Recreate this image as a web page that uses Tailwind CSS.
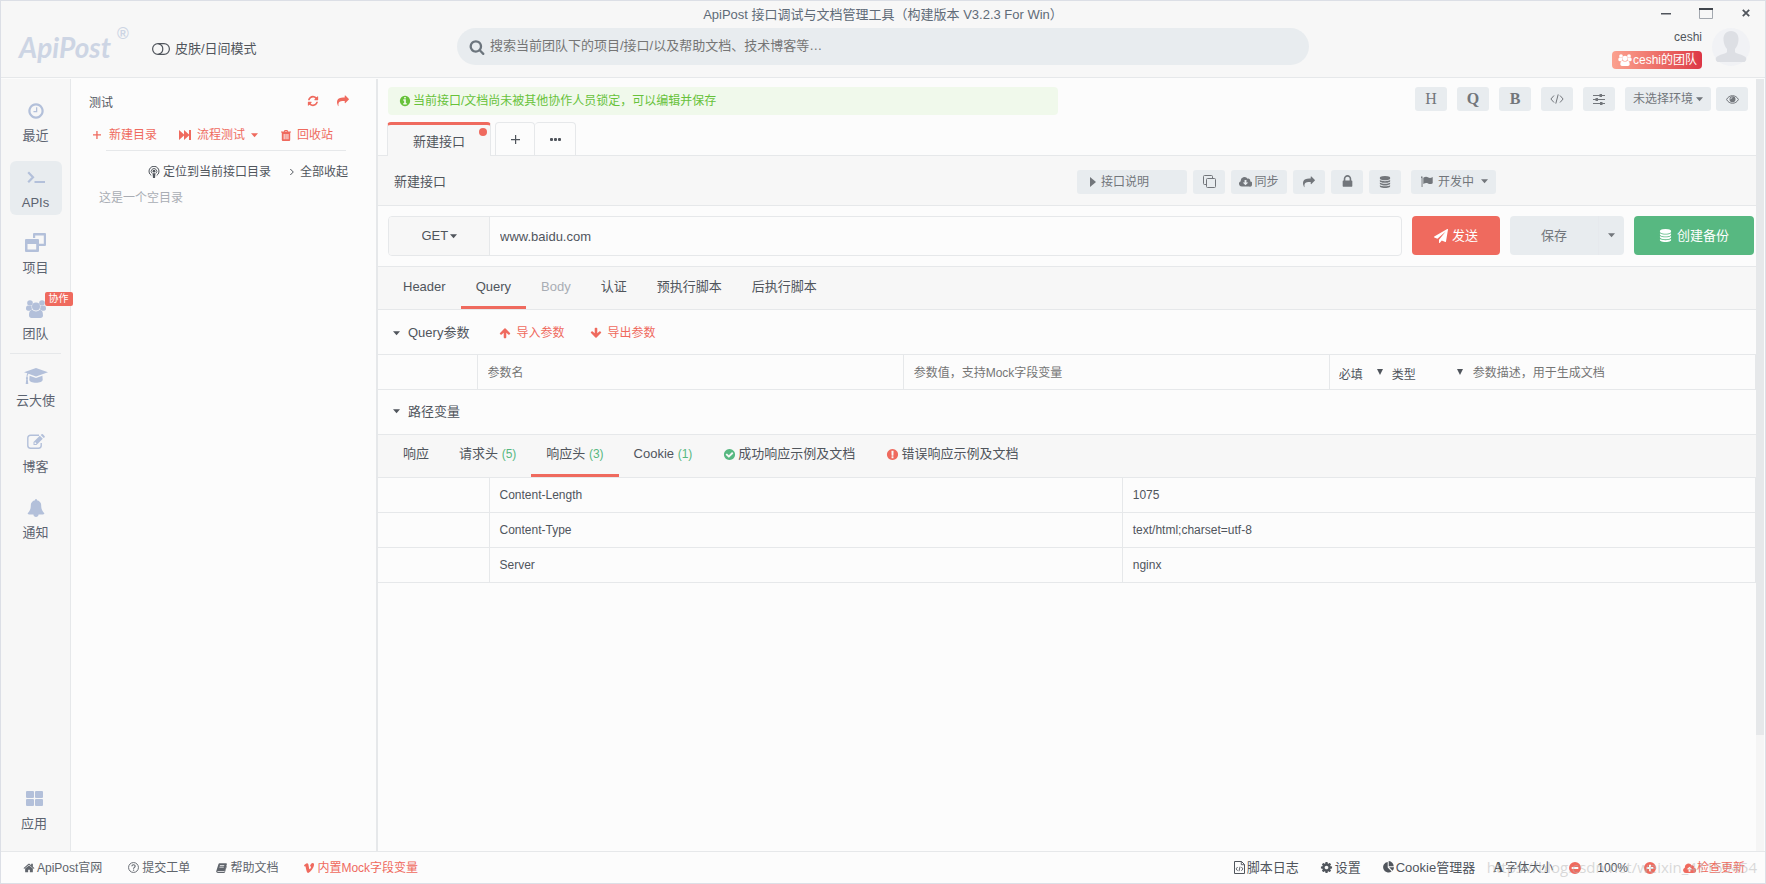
<!DOCTYPE html>
<html lang="zh-CN">
<head>
<meta charset="utf-8">
<title>ApiPost 接口调试与文档管理工具</title>
<script src="https://cdn.jsdelivr.net/npm/@tailwindcss/browser@4"></script>
</head>
<body class="relative flex h-screen flex-col overflow-hidden border border-[#dcdfe6] bg-[#fcfcfc] font-['Liberation_Sans','Noto_Sans_CJK_SC',sans-serif] text-[13px] leading-5 text-[#50555c]">

<svg class="hidden" aria-hidden="true">
  <symbol id="caret" viewBox="0 0 8 5"><path d="M0 0h8L4 4.500z"/></symbol>
  <symbol id="refresh" viewBox="0 0 1792 1792"><path d="M1639 1056q0 5-1 7-64 268-268 434.500t-478 166.500q-146 0-282.500-55t-243.500-157l-129 129q-19 19-45 19t-45-19-19-45v-448q0-26 19-45t45-19h448q26 0 45 19t19 45-19 45l-137 137q71 66 161 102t187 36q134 0 250-65t186-179q11-17 53-117 8-23 30-23h192q13 0 22.500 9.500t9.500 22.500zm25-800v448q0 26-19 45t-45 19h-448q-26 0-45-19t-19-45 19-45l138-138q-148-137-349-137-134 0-250 65t-186 179q-11 17-53 117-8 23-30 23h-199q-13 0-22.500-9.500t-9.500-22.500v-7q65-268 270-434.500t480-166.500q146 0 284 55.500t245 156.500l130-129q19-19 45-19t45 19 19 45z"/></symbol>
  <symbol id="share" viewBox="0 0 1792 1792"><path d="M1792 640q0 26-19 45l-512 512q-19 19-45 19t-45-19-19-45v-256h-224q-98 0-175.500 6t-154 21.500-133 42.500-105.500 69.500-80 101-48.500 138.500-17.500 181q0 55 5 123 0 6 2.500 23.500t2.500 26.500q0 15-8.500 25t-23.500 10q-16 0-28-17-7-9-13-22t-13.500-30-10.500-24q-127-285-127-451 0-199 53-333 162-403 875-403h224v-256q0-26 19-45t45-19 45 19l512 512q19 19 19 45z"/></symbol>
  <symbol id="search" viewBox="0 0 1792 1792"><path d="M1216 832q0-185-131.500-316.500t-316.500-131.500-316.500 131.500-131.500 316.500 131.500 316.500 316.500 131.500 316.500-131.500 131.500-316.500zm512 832q0 52-38 90t-90 38q-54 0-90-38l-343-342q-179 124-399 124-143 0-273.500-55.500t-225-150-150-225-55.500-273.500 55.500-273.500 150-225 225-150 273.500-55.500 273.500 55.500 225 150 150 225 55.500 273.500q0 220-124 399l343 343q37 37 37 90z"/></symbol>
  <symbol id="info" viewBox="0 0 1792 1792"><path d="M1152 1376v-160q0-14-9-23t-23-9h-96v-512q0-14-9-23t-23-9h-320q-14 0-23 9t-9 23v160q0 14 9 23t23 9h96v320h-96q-14 0-23 9t-9 23v160q0 14 9 23t23 9h448q14 0 23-9t9-23zm-128-896v-160q0-14-9-23t-23-9h-192q-14 0-23 9t-9 23v160q0 14 9 23t23 9h192q14 0 23-9t9-23zm640 416q0 209-103 385.500t-279.500 279.500-385.500 103-385.500-103-279.500-279.500-103-385.500 103-385.500 279.500-279.500 385.500-103 385.500 103 279.500 279.500 103 385.500z"/></symbol>
  <symbol id="check" viewBox="0 0 1792 1792"><path d="M1412 734q0-28-18-46l-91-90q-19-19-45-19t-45 19l-408 407-226-226q-19-19-45-19t-45 19l-91 90q-18 18-18 46 0 27 18 45l362 362q19 19 45 19 27 0 46-19l543-543q18-18 18-45zm252 162q0 209-103 385.500t-279.500 279.500-385.500 103-385.500-103-279.500-279.500-103-385.500 103-385.500 279.500-279.500 385.500-103 385.500 103 279.500 279.500 103 385.500z"/></symbol>
  <symbol id="exclaim" viewBox="0 0 1792 1792"><path d="M896 128q209 0 385.500 103t279.500 279.500 103 385.500-103 385.500-279.500 279.500-385.500 103-385.500-103-279.500-279.500-103-385.500 103-385.500 279.500-279.500 385.500-103zm128 1247v-190q0-14-9-23.500t-22-9.500h-192q-13 0-23 10t-10 23v190q0 13 10 23t23 10h192q13 0 22-9.500t9-23.500zm-2-344l18-621q0-12-10-18-10-8-24-8h-220q-14 0-24 8-10 6-10 18l17 621q0 10 10 17.500t24 7.500h185q14 0 23.500-7.500t10.500-17.500z"/></symbol>
  <symbol id="lock" viewBox="0 0 1792 1792"><path d="M640 768h512v-192q0-106-75-181t-181-75-181 75-75 181v192zm832 96v576q0 40-28 68t-68 28h-960q-40 0-68-28t-28-68v-576q0-40 28-68t68-28h32v-192q0-184 132-316t316-132 316 132 132 316v192h32q40 0 68 28t28 68z"/></symbol>
  <symbol id="database" viewBox="0 0 1792 1792"><path d="M896 768q237 0 443-43t325-127v170q0 69-103 128t-280 93.500-385 34.500-385-34.500-280-93.500-103-128v-170q119 84 325 127t443 43zm0 768q237 0 443-43t325-127v170q0 69-103 128t-280 93.500-385 34.500-385-34.500-280-93.500-103-128v-170q119 84 325 127t443 43zm0-384q237 0 443-43t325-127v170q0 69-103 128t-280 93.500-385 34.500-385-34.500-280-93.500-103-128v-170q119 84 325 127t443 43zm0-1152q208 0 385 34.500t280 93.500 103 128v128q0 69-103 128t-280 93.500-385 34.500-385-34.500-280-93.500-103-128v-128q0-69 103-128t280-93.500 385-34.500z"/></symbol>
  <symbol id="plane" viewBox="0 0 1792 1792"><path d="M1764 11q33 24 27 64l-256 1536q-5 29-32 45-14 8-31 8-11 0-24-5l-453-185-242 295q-18 23-49 23-13 0-22-4-19-7-30.500-23.500t-11.500-36.500v-349l864-1059-1069 925-395-162q-37-14-40-55-2-40 32-59l1664-960q15-9 32-9 20 0 36 11z"/></symbol>
  <symbol id="home" viewBox="0 0 1792 1792"><path d="M1472 992v480q0 26-19 45t-45 19h-384v-384h-256v384h-384q-26 0-45-19t-19-45v-480q0-1 .5-3t.5-3l575-474 575 474q1 2 1 6zm223-69l-62 74q-8 9-21 11h-3q-13 0-21-7l-692-577-692 577q-12 8-24 7-13-2-21-11l-62-74q-8-10-7-23.500t11-21.500l719-599q32-26 76-26t76 26l244 204v-195q0-14 9-23t23-9h192q14 0 23 9t9 23v408l219 182q10 8 11 21.500t-7 23.500z"/></symbol>
  <symbol id="bell" viewBox="0 0 1792 1792"><path d="M1728 1408q0 52-38 90t-90 38h-448q0 106-75 181t-181 75-181-75-75-181h-448q-52 0-90-38t-38-90q50-42 91-88t85-119.500 74.500-158.500 50-206 19.500-260q0-152 117-282.500t307-158.500q-8-19-8-39 0-40 28-68t68-28 68 28 28 68q0 20-8 39 190 28 307 158.500t117 282.500q0 139 19.500 260t50 206 74.500 158.500 85 119.500 91 88z"/></symbol>
  <symbol id="clock" viewBox="0 0 1792 1792"><path d="M1024 544v448q0 14-9 23t-23 9h-320q-14 0-23-9t-9-23v-64q0-14 9-23t23-9h224v-352q0-14 9-23t23-9h64q14 0 23 9t9 23zm416 352q0-148-73-273t-198-198-273-73-273 73-198 198-73 273 73 273 198 198 273 73 273-73 198-198 73-273zm224 0q0 209-103 385.500t-279.500 279.500-385.500 103-385.500-103-279.500-279.500-103-385.500 103-385.500 279.500-279.500 385.500-103 385.500 103 279.500 279.500 103 385.500z"/></symbol>
  <symbol id="cog" viewBox="0 0 1792 1792"><path d="M1152 896q0-106-75-181t-181-75-181 75-75 181 75 181 181 75 181-75 75-181zm512-109v222q0 12-8 23t-20 13l-185 28q-19 54-39 91 35 50 107 138 10 12 10 25t-9 23q-27 37-99 108t-94 71q-12 0-26-9l-138-108q-44 23-91 38-16 136-29 186-7 28-36 28h-222q-14 0-24.500-8.500t-11.500-21.500l-28-184q-49-16-90-37l-141 107q-10 9-25 9-14 0-25-11-126-114-165-168-7-10-7-23 0-12 8-23 15-21 51-66.500t54-70.500q-27-50-41-99l-183-27q-13-2-21-12.500t-8-23.500v-222q0-12 8-23t19-13l186-28q14-46 39-92-40-57-107-138-10-12-10-24 0-10 9-23 26-36 98.500-107.500t94.500-71.500q13 0 26 10l138 107q44-23 91-38 16-136 29-186 7-28 36-28h222q14 0 24.500 8.500t11.500 21.500l28 184q49 16 90 37l142-107q9-9 24-9 13 0 25 10 129 119 165 170 7 8 7 22 0 12-8 23-15 21-51 66.500t-54 70.500q26 50 41 98l183 28q13 2 21 12.500t8 23.500z"/></symbol>
  <symbol id="up" viewBox="0 0 1792 1792"><path d="M1675 971q0 51-37 90l-75 75q-38 38-91 38-54 0-90-38l-294-293v704q0 52-37.500 84.500t-90.500 32.500h-128q-53 0-90.500-32.500t-37.500-84.500v-704l-294 293q-36 38-90 38t-90-38l-75-75q-38-38-38-90 0-53 38-91l651-651q35-37 90-37 54 0 91 37l651 651q37 39 37 91z"/></symbol>
  <symbol id="users" viewBox="0 0 20 18"><circle cx="4" cy="3" r="2.800"/><circle cx="16" cy="3" r="2.800"/><path d="M0 8.500C0 6.500.8 5.400 2 5.400c.8.600 2.200.9 3.600.4-.2 1.500 0 2.700.6 3.900-1 0-1.800.6-2.400 1H2C.7 10.700 0 9.800 0 8.500zM20 8.500c0-2-.8-3.100-2-3.100-.8.600-2.200.9-3.600.4.200 1.500 0 2.700-.6 3.900 1 0 1.800.6 2.400 1H18c1.300 0 2-.9 2-2.200z"/><circle cx="10" cy="6.500" r="4"/><path d="M6.300 10.100c2.300 1.700 5.100 1.700 7.400 0 2.500 0 3.300 2.400 3.300 5.400 0 1.500-1 2.500-2.500 2.500h-9C4 18 3 17 3 15.500c0-3 .8-5.400 3.300-5.400z"/></symbol>
  <symbol id="terminal" viewBox="0 0 18 13"><path d="M1.200 1.300 6 6.300l-4.800 5" fill="none" stroke="currentColor" stroke-width="2.200"/><path d="M7.500 10H18v2H7.500z"/></symbol>
  <symbol id="project" viewBox="0 0 21 19"><path fill-rule="evenodd" d="M9 0h11q1 0 1 1v11q0 1-1 1h-6v-2.200h4.800V2.500h-8.600V5H8V1q0-1 1-1z"/><path fill-rule="evenodd" d="M1 6h12q1 0 1 1v11q0 1-1 1H1q-1 0-1-1V7q0-1 1-1zm1.500 5v5.500h8.700V11z"/></symbol>
  <symbol id="grad" viewBox="0 0 24 16"><path d="M12 0 24 4.200 12 8.400 4.500 5.800C3.800 6.600 3.500 7.600 3.500 9c.7.500.8 1.300.2 1.900L4.300 16H1.700l.6-5.100c-.6-.6-.5-1.500.2-1.900 0-1.500.2-2.700.8-3.700L0 4.200z"/><path d="M5.600 7.700 12 10l6.400-2.300.3 4c0 1.700-3 3-6.700 3s-6.700-1.300-6.700-3z"/></symbol>
  <symbol id="edit" viewBox="0 0 18 15"><path d="M12 1.200H3.500A2.700 2.700 0 0 0 .8 3.900v7.600a2.700 2.700 0 0 0 2.700 2.700h8a2.700 2.700 0 0 0 2.700-2.700V9" fill="none" stroke="currentColor" stroke-width="1.400"/><path fill-rule="evenodd" d="m6.500 8 6.300-6.200 3 3L9.500 11h-3zm1 .7v1.400h1.400l.6-.6L8.100 8.100zM13.700 1l.8-.7q.7-.6 1.400 0L17.500 2q.6.700 0 1.400l-.8.700z"/></symbol>
  <symbol id="grid4" viewBox="0 0 17 15"><rect width="8" height="7" rx="1"/><rect x="9" width="8" height="7" rx="1"/><rect y="8" width="8" height="7" rx="1"/><rect x="9" y="8" width="8" height="7" rx="1"/></symbol>
  <symbol id="plus" viewBox="0 0 10 10"><path d="M4.300 1h1.300v3.300H9v1.300H5.600V9H4.300V5.600H1V4.300h3.300z"/></symbol>
  <symbol id="ff" viewBox="0 0 12 10"><path d="M0 0l5 4.500V0l5 4.500V0h2v10h-2V5.500L5 10V5.500L0 10z"/></symbol>
  <symbol id="trash" viewBox="0 0 10 11"><path fill-rule="evenodd" d="M3 1.500 3.500 0h3L7 1.500h3v1H9.200V10q0 1-1 1H1.800q-1 0-1-1V2.500H0v-1zm1 0h2L5.800.9H4.200zM2.700 4v5.300h.9V4zm1.900 0v5.300h.9V4zm1.900 0v5.300h.9V4z"/></symbol>
  <symbol id="podcast" viewBox="0 0 12 12"><g fill="none" stroke="currentColor"><path d="M3.300 9.500a5 5 0 1 1 5.400 0"/><path d="M4 7.300a2.800 2.800 0 1 1 4 0" stroke-width=".9"/></g><circle cx="6" cy="5.200" r="1.400"/><path d="M4.500 7.300h3L7 12H5z"/></symbol>
  <symbol id="angle" viewBox="0 0 6 8"><path d="m1.300 1 3 3-3 3" fill="none" stroke="currentColor"/></symbol>
  <symbol id="toggle" viewBox="0 0 18 12"><g fill="none" stroke="currentColor" stroke-width="1.200"><rect x=".6" y=".6" width="16.800" height="10.800" rx="5.400"/><path d="M6.500.8a5.300 5.300 0 0 1 0 10.400"/></g></symbol>
  <symbol id="clone" viewBox="0 0 13 13"><g fill="none" stroke="currentColor"><rect x="3.500" y="3.500" width="9" height="9" rx="1"/><path d="M3 9.500H1.500a1 1 0 0 1-1-1v-7a1 1 0 0 1 1-1h7a1 1 0 0 1 1 1V3"/></g></symbol>
  <symbol id="clouddown" viewBox="0 0 14 11"><path fill-rule="evenodd" d="M3 11A3 3 0 0 1 1.900 5.200 4 4 0 0 1 9.300 2.600a2 2 0 0 1 2.700 2.500A3 3 0 0 1 11 11zM6 4v2.500H4L7 9.500l3-3H8V4z"/></symbol>
  <symbol id="cloudup" viewBox="0 0 14 11"><path fill-rule="evenodd" d="M3 11A3 3 0 0 1 1.900 5.200 4 4 0 0 1 9.300 2.600a2 2 0 0 1 2.700 2.500A3 3 0 0 1 11 11zM6 9.500V7H4l3-3 3 3H8v2.500z"/></symbol>
  <symbol id="flag" viewBox="0 0 12 11"><path d="M0 .5h1.500V11H.6V2.200L0 1.500zM2.300 1.800C4.500.3 6 .8 7.300 1.500c1.400.8 2.700.5 4.400-.5v6.200C9.800 8.300 8.500 8.200 7 7.500c-1.400-.7-2.900-.6-4.700.5z"/></symbol>
  <symbol id="code" viewBox="0 0 14 10"><path d="M4 1.500.9 5 4 8.500M10 1.500 13.100 5 10 8.500M8.200.4 5.800 9.600" fill="none" stroke="currentColor"/></symbol>
  <symbol id="sliders" viewBox="0 0 12 11"><path d="M0 1h12v1H0zM0 5h12v1H0zM0 9h12v1H0zM6.500 0h2.500v3H6.500zM2.500 4H5v3H2.500zM7 8h2.500v3H7z"/></symbol>
  <symbol id="eye" viewBox="0 0 13 9"><path d="M.6 4.500C3-.6 10-.6 12.400 4.500 10 9.500 3 9.500.6 4.500z" fill="none" stroke="currentColor"/><path fill-rule="evenodd" d="M6.500 1.300a3 3 0 1 0 0 6 3 3 0 0 0 0-6zm-.1.900v.7q-1.300.1-1.500 1.400h-.6q.2-2 2.100-2.100z"/></symbol>
  <symbol id="question" viewBox="0 0 12 12"><circle cx="6" cy="6" r="5.400" fill="none" stroke="currentColor"/><path d="M4.200 4.700C4.300 2.500 7.900 2.600 7.800 4.600 7.700 5.800 6 5.900 6 7.400" fill="none" stroke="currentColor" stroke-width="1.200"/><path d="M5.400 8.300h1.300v1.200H5.400z"/></symbol>
  <symbol id="book" viewBox="0 0 12 11"><path fill-rule="evenodd" d="M3.900.3h7.200q1 .2.800 1.100L9.800 8.200q-.3.800-1.100.8H2q-.8.200-.6.700.2.300.8.300h6.900L11.300 3q.6.300.4 1L9.800 10.200q-.3.800-1.100.8H2Q.4 10.800.1 9.300L2.700 1.200Q3 .3 3.900.3zM4.300 2.500l-.2.700h4.800l.2-.7zm-.5 1.700-.2.700h4.800l.2-.7z"/></symbol>
  <symbol id="vimeo" viewBox="0 0 11 11"><path d="M0 2.700C1.200 1.500 2.300.4 3.300.4c1.500 0 1.600 1.400 1.900 3.200.3 1.900.6 3.300 1 3.300.5 0 1.400-1.500 1.500-2.200.1-.8-.3-1.200-1.300-.9C7.100 1.300 8.400.1 9.700.1c1 .1 1.500.9 1.300 2.200C10.700 5.400 6.600 10.800 4.700 10.900c-1.300 0-1.700-1.300-2.300-3.700C2 5.500 1.900 3.500 1.200 3.500c-.2 0-.4.100-.7.300z"/></symbol>
  <symbol id="filecode" viewBox="0 0 11 13"><g fill="none" stroke="currentColor"><path d="M.5.500h7l3 3v9H.5z"/><path d="M7.300.5v3.200h3.200M3.600 6 2.100 7.900l1.500 1.900M7.400 6l1.500 1.900-1.500 1.900M6 5.700l-1 4.500" stroke-width=".9"/></g></symbol>
  <symbol id="pie" viewBox="0 0 12 12"><path d="M5.700.9v5.500l3.900 4A5.300 5.300 0 1 1 5.700.9z"/><path d="M6.700 0a5.300 5.300 0 0 1 5 5.300h-5zM7.200 6.300h4.800a5.300 5.300 0 0 1-1.500 3.500z"/></symbol>
  <symbol id="minusc" viewBox="0 0 12 12"><path fill-rule="evenodd" d="M6 0a6 6 0 1 1 0 12A6 6 0 0 1 6 0zM2.700 5v2h6.600V5z"/></symbol>
  <symbol id="plusc" viewBox="0 0 12 12"><path fill-rule="evenodd" d="M6 0a6 6 0 1 1 0 12A6 6 0 0 1 6 0zM5 2.700V5H2.700v2H5v2.300h2V7h2.300V5H7V2.700z"/></symbol>
</svg>

<header class="grid h-[77px] shrink-0 grid-cols-[1fr_852px_1fr] border-b border-[#e6e8ea] bg-[#f7f7f7]">
  <div class="flex items-start pl-[18px]">
    <div class="mt-7 w-[98px] font-['Lato','Liberation_Sans',sans-serif] text-[28px] leading-9 font-bold text-[#cdd5e4] italic">ApiPost</div>
    <div class="mt-[21px] w-[35px] text-base leading-6 font-bold text-[#cdd5e4]">®</div>
    <button class="mt-[38px] flex items-center gap-[5px]"><svg class="h-3 w-[18px] fill-current"><use href="#toggle"/></svg>皮肤/日间模式</button>
  </div>
  <div>
    <h1 class="h-[27px] text-center leading-[27px] text-[#606b78]">ApiPost 接口调试与文档管理工具（构建版本 V3.2.3 For Win）</h1>
    <label class="flex h-[37px] items-center gap-[5px] rounded-full bg-[#e8ecef] pl-3 text-[#6c757d]">
      <svg class="size-4 fill-current"><use href="#search"/></svg>
      <input type="text" aria-label="搜索" class="h-5 flex-1 bg-transparent pb-[2px] outline-none placeholder:text-[#757575]" placeholder="搜索当前团队下的项目/接口/以及帮助文档、技术博客等…">
    </label>
  </div>
  <div class="flex flex-col items-end pr-[15px]">
    <div class="flex h-6 items-center gap-[28px]">
      <button aria-label="最小化"><svg class="h-[11px] w-[10px]" viewBox="0 0 10 11"><path d="M0 5h10v1.500H0z" fill="#50555c"/></svg></button>
      <button aria-label="最大化"><svg class="h-[11px] w-[14px]" viewBox="0 0 14 11"><path d="M.5.500h13v10H.5z" fill="none" stroke="#a3a8af"/><path d="M0 0h14v2H0z" fill="#41464d"/></svg></button>
      <button aria-label="关闭" class="ml-px"><svg class="size-2" viewBox="0 0 8 8"><path d="m.8.800 6.400 6.400M7.200.800.800 7.200" stroke="#50555c" stroke-width="1.800"/></svg></button>
    </div>
    <div class="flex gap-[10px] pt-[2px]">
      <div class="flex flex-col items-end text-xs">
        <span class="leading-5">ceshi</span>
        <button class="mt-1 flex h-[18px] items-center rounded-[4px] bg-linear-to-r from-[#fba18f] to-[#dc3545] pr-[5px] pl-[6px] text-white"><svg class="mr-px h-3 w-[14px] fill-current"><use href="#users"/></svg>ceshi的团队</button>
      </div>
      <svg class="mt-px size-[38px]" viewBox="0 0 38 38"><circle cx="19" cy="19" r="19" fill="#f1f2f5"/><path d="M19 3c5 0 7.800 3.500 7.500 9-.3 4-1.600 7-3.500 9v3c1 2 8 2.500 10.500 5 1.500 1.500.8 4-1 5h-27c-1.800-1-2.500-3.500-1-5C7 26.500 14 26 15 24v-3c-1.900-2-3.200-5-3.500-9C11.200 6.500 14 3 19 3z" fill="#dddfe4"/></svg>
    </div>
  </div>
</header>

<div class="mt-px flex min-h-0 flex-1">
  <nav class="flex w-[70px] shrink-0 flex-col items-center border-r border-[#e6e8ea] bg-[#f7f7f7] pt-4 text-[#5c6370]">
    <div class="flex flex-col gap-3">
      <a href="#" class="flex h-[54px] w-[52px] flex-col items-center"><span class="flex h-[31px] items-center"><svg class="size-[18px] fill-[#b3c0da]"><use href="#clock"/></svg></span>最近</a>
      <a href="#" class="flex h-[54px] w-[52px] flex-col items-center rounded-md bg-[#e8ecef]"><span class="flex h-8 items-center"><svg class="h-[13px] w-[18px] fill-[#b3c0da] text-[#b3c0da]"><use href="#terminal"/></svg></span>APIs</a>
      <a href="#" class="flex h-[54px] w-[52px] flex-col items-center"><span class="flex h-[31px] items-center"><svg class="h-[19px] w-[21px] fill-[#b3c0da]"><use href="#project"/></svg></span>项目</a>
      <a href="#" class="relative flex h-[54px] w-[52px] flex-col items-center"><span class="flex h-[31px] items-center"><svg class="h-[18px] w-5 fill-[#b3c0da]"><use href="#users"/></svg></span>团队<span class="absolute -top-px left-[35px] h-[14px] w-7 rounded-xs bg-[#ef6a5e] text-center text-[10px] leading-[13px] text-white">协作</span></a>
    </div>
    <hr class="mt-[6px] w-[51px] border-[#e6e8ea]">
    <div class="mt-[6px] flex flex-col gap-3">
      <a href="#" class="flex h-[54px] w-[52px] flex-col items-center"><span class="flex h-[31px] items-center"><svg class="h-4 w-6 fill-[#b3c0da]"><use href="#grad"/></svg></span>云大使</a>
      <a href="#" class="flex h-[54px] w-[52px] flex-col items-center"><span class="flex h-[31px] items-center"><svg class="h-[15px] w-[18px] fill-[#b3c0da] text-[#b3c0da]"><use href="#edit"/></svg></span>博客</a>
      <a href="#" class="flex h-[54px] w-[52px] flex-col items-center"><span class="flex h-[31px] items-center"><svg class="size-[18px] fill-[#b3c0da]"><use href="#bell"/></svg></span>通知</a>
    </div>
    <a href="#" class="mt-auto mr-[3px] mb-[14px] flex h-[54px] w-[52px] flex-col items-center"><span class="flex h-[31px] items-center"><svg class="h-[15px] w-[17px] fill-[#b3c0da]"><use href="#grid4"/></svg></span>应用</a>
  </nav>

  <aside class="w-[307px] shrink-0 border-r-2 border-[#e6e8ea] pt-3 text-xs">
    <div class="flex h-5 items-center pr-[27px] pl-[18px] leading-5">
      <h2 class="flex-1 pt-1">测试</h2>
      <button aria-label="刷新" class="mr-[18px]"><svg class="size-3 fill-[#ef6a5e]"><use href="#refresh"/></svg></button>
      <button aria-label="分享"><svg class="size-3 fill-[#ef6a5e]"><use href="#share"/></svg></button>
    </div>
    <div class="mt-[14px] flex h-5 items-center pl-[21px] text-[#ef6a5e]">
      <button class="flex items-center gap-[7px]"><svg class="size-[10px] fill-current"><use href="#plus"/></svg>新建目录</button>
      <button class="ml-[22px] flex items-center gap-[6px]"><svg class="h-[10px] w-3 fill-current"><use href="#ff"/></svg>流程测试<svg class="h-[5px] w-[7px] fill-current"><use href="#caret"/></svg></button>
      <button class="ml-[23px] flex items-center gap-[6px]"><svg class="h-[11px] w-[10px] fill-current"><use href="#trash"/></svg>回收站</button>
    </div>
    <hr class="mt-[5px] mr-[30px] ml-[35px] border-[#e6e8ea]">
    <div class="mt-[11px] flex h-5 items-center justify-end gap-[18px] pr-7">
      <button class="flex items-center gap-[3px]"><svg class="size-3 fill-current"><use href="#podcast"/></svg>定位到当前接口目录</button>
      <button class="flex items-center gap-[5px]"><svg class="h-2 w-[6px] fill-current"><use href="#angle"/></svg>全部收起</button>
    </div>
    <p class="mt-[6px] pl-7 leading-5 text-[#a9adb4]">这是一个空目录</p>
  </aside>

  <main class="min-w-0 flex-1">
    <div class="flex justify-between pt-2 pr-2 pl-[10px]">
      <div class="flex h-7 w-[calc(50%-10px)] items-center gap-[2px] rounded-[4px] bg-[#f0f9eb] pl-[11px] text-xs text-[#67c23a]"><svg class="size-3 fill-current"><use href="#info"/></svg>当前接口/文档尚未被其他协作人员锁定，可以编辑并保存</div>
      <div class="flex h-6 gap-[10px] text-[#72767b]">
        <button class="w-8 rounded-[3px] bg-[#e8ecef] font-['Liberation_Serif',serif] text-base leading-6">H</button>
        <button class="w-8 rounded-[3px] bg-[#e8ecef] font-['Liberation_Serif',serif] text-base leading-6 font-bold">Q</button>
        <button class="w-8 rounded-[3px] bg-[#e8ecef] font-['Liberation_Serif',serif] text-base leading-6 font-bold">B</button>
        <button aria-label="代码" class="flex w-8 items-center justify-center rounded-[3px] bg-[#e8ecef]"><svg class="h-[10px] w-[14px] fill-current"><use href="#code"/></svg></button>
        <button aria-label="参数设置" class="flex w-8 items-center justify-center rounded-[3px] bg-[#e8ecef]"><svg class="h-[11px] w-3 fill-current"><use href="#sliders"/></svg></button>
        <div class="flex gap-[5px]">
          <label class="flex w-[86px] items-center gap-[3px] rounded-[3px] bg-[#e8ecef] pl-2"><select aria-label="环境" class="w-[60px] appearance-none bg-transparent text-xs outline-none"><option>未选择环境</option></select><svg class="h-[5px] w-[7px] shrink-0 fill-current"><use href="#caret"/></svg></label>
          <button aria-label="查看环境" class="flex w-8 items-center justify-center rounded-[3px] bg-[#e8ecef]"><svg class="h-[9px] w-[13px] fill-current"><use href="#eye"/></svg></button>
        </div>
      </div>
    </div>

    <div class="mt-[7px] flex h-[34px] items-stretch">
      <div class="w-[9px] border-b border-[#e6e8ea]"></div>
      <button class="relative w-[104px] rounded-t-[4px] border-x border-t-3 border-x-[#e6e8ea] border-t-[#ef6a5e] bg-[#f7f7f7] pt-[2px]">新建接口<span class="absolute top-[3px] right-[3px] size-2 rounded-full bg-[#ef6a5e]"></span></button>
      <div class="flex flex-1 border-b border-[#e6e8ea] pl-1">
        <button aria-label="新增标签" class="flex w-10 items-center justify-center rounded-t-[4px] border border-b-0 border-[#e6e8ea]"><svg class="size-[11px] fill-[#50555c]" viewBox="0 0 11 11"><path d="M5 1h1.200v4H10v1.200H6.200V10H5V6.200H1V5h4z"/></svg></button>
        <button aria-label="更多" class="flex w-[41px] items-center justify-center rounded-t-[4px] border border-b-0 border-l-0 border-[#e6e8ea]"><svg class="h-[3px] w-[11px] fill-[#50555c]" viewBox="0 0 11 3"><rect width="3" height="3" rx="1"/><rect x="4" width="3" height="3" rx="1"/><rect x="8" width="3" height="3" rx="1"/></svg></button>
      </div>
    </div>

    <div class="flex h-[50px] items-center border-b border-[#e6e8ea] bg-[#f7f7f7] pt-[2px]">
      <h2 class="w-1/2 pl-4">新建接口</h2>
      <div class="flex h-6 gap-[6px] pl-[10px] text-xs text-[#72767b]">
        <button class="flex w-[110px] items-center gap-[5px] rounded-[3px] bg-[#e8ecef] pl-[13px]"><svg class="h-[10px] w-[6px] fill-current" viewBox="0 0 6 10"><path d="M0 0l6 5-6 5z"/></svg>接口说明</button>
        <button aria-label="复制" class="flex w-8 items-center justify-center rounded-[3px] bg-[#e8ecef]"><svg class="size-[13px] fill-current"><use href="#clone"/></svg></button>
        <button class="flex w-14 items-center justify-center gap-[2px] rounded-[3px] bg-[#e8ecef]"><svg class="h-[11px] w-[13px] fill-current"><use href="#clouddown"/></svg>同步</button>
        <button aria-label="分享" class="flex w-8 items-center justify-center rounded-[3px] bg-[#e8ecef]"><svg class="size-3 fill-current"><use href="#share"/></svg></button>
        <button aria-label="锁定" class="flex w-8 items-center justify-center rounded-[3px] bg-[#e8ecef]"><svg class="size-[15px] fill-current"><use href="#lock"/></svg></button>
        <button aria-label="备份" class="flex w-8 items-center justify-center rounded-[3px] bg-[#e8ecef]"><svg class="size-3 fill-current"><use href="#database"/></svg></button>
        <label class="ml-1 flex w-[85px] items-center gap-[5px] rounded-[3px] bg-[#e8ecef] pl-[10px]"><svg class="h-[11px] w-3 shrink-0 fill-current"><use href="#flag"/></svg><select aria-label="接口状态" class="w-[38px] appearance-none bg-transparent outline-none"><option>开发中</option></select><svg class="h-[5px] w-[7px] shrink-0 fill-current"><use href="#caret"/></svg></label>
      </div>
    </div>

    <div class="flex items-start gap-[10px] border-b border-[#e6e8ea] py-[10px] pr-[2px] pl-[10px]">
      <div class="flex h-10 flex-1 overflow-hidden rounded-[4px] border border-[#e6e8ea]">
        <label class="flex w-[101px] items-center justify-center border-r border-[#e6e8ea] bg-[#f7f7f7]"><select aria-label="请求方法" class="w-[28px] appearance-none bg-transparent outline-none"><option>GET</option></select><svg class="h-[5px] w-[7px] fill-current"><use href="#caret"/></svg></label>
        <input type="text" aria-label="请求地址" value="www.baidu.com" class="flex-1 bg-transparent px-[10px] pt-[2px] outline-none">
      </div>
      <button class="flex h-[39px] w-[88px] items-center justify-center gap-1 rounded-[4px] bg-[#ef6a5e] text-white"><svg class="size-[14px] fill-current"><use href="#plane"/></svg>发送</button>
      <div class="flex h-[39px] w-[114px] rounded-[4px] bg-[#e8ecef] text-[#72767b]">
        <button class="flex-1 border-r border-[#e6e9ed]">保存</button>
        <button aria-label="更多保存选项" class="flex w-[25px] items-center justify-center"><svg class="h-[5px] w-[7px] fill-current"><use href="#caret"/></svg></button>
      </div>
      <button class="flex h-[39px] w-[120px] items-center justify-center gap-[5px] rounded-[4px] bg-[#57b881] text-white"><svg class="size-[13px] fill-current"><use href="#database"/></svg>创建备份</button>
    </div>

    <div class="flex h-[43px] border-b border-[#e6e8ea] bg-[#f7f7f7] pl-[10px]">
      <button class="border-b-3 border-transparent px-[15px]">Header</button>
      <button class="border-b-3 border-[#ef6a5e] px-[15px]">Query</button>
      <button class="border-b-3 border-transparent px-[15px] text-[#a9adb4]">Body</button>
      <button class="border-b-3 border-transparent px-[15px]">认证</button>
      <button class="border-b-3 border-transparent px-[15px]">预执行脚本</button>
      <button class="border-b-3 border-transparent px-[15px]">后执行脚本</button>
    </div>

    <div class="flex h-[45px] items-center border-b border-[#e6e8ea] pt-[2px] pl-[15px]">
      <button class="flex items-center gap-2"><svg class="h-[5px] w-[7px] fill-current"><use href="#caret"/></svg>Query参数</button>
      <button class="ml-[30px] flex items-center gap-[5px] text-xs text-[#ef6a5e]"><svg class="size-3 fill-current"><use href="#up"/></svg>导入参数</button>
      <button class="ml-[26px] flex items-center gap-[5px] text-xs text-[#ef6a5e]"><svg class="size-3 rotate-180 fill-current"><use href="#up"/></svg>导出参数</button>
    </div>
    <table class="w-full table-fixed text-xs">
      <tbody>
        <tr class="h-[34px] border-b border-[#e6e8ea]">
          <td class="w-[99px] border-r border-[#e6e8ea]"></td>
          <td class="border-r border-[#e6e8ea] px-[10px]"><input type="text" aria-label="参数名" placeholder="参数名" class="block w-full bg-transparent pt-[2px] outline-none placeholder:text-[#757575]"></td>
          <td class="border-r border-[#e6e8ea] px-[10px]"><input type="text" aria-label="参数值" placeholder="参数值，支持Mock字段变量" class="block w-full bg-transparent pt-[2px] outline-none placeholder:text-[#757575]"></td>
          <td class="border-r border-[#e6e8ea] pl-[9px]">
            <div class="flex items-center">
              <label class="flex items-center"><select aria-label="必填" class="w-[38px] appearance-none bg-transparent pt-[6px] outline-none"><option>必填</option></select><svg class="size-[6px] fill-current" viewBox="0 0 6 6"><path d="M0 0h6L3 6z"/></svg></label>
              <label class="ml-[9px] flex items-center"><select aria-label="类型" class="w-[65px] appearance-none bg-transparent pt-[6px] outline-none"><option>类型</option></select><svg class="size-[6px] fill-current" viewBox="0 0 6 6"><path d="M0 0h6L3 6z"/></svg></label>
              <input type="text" aria-label="参数描述" placeholder="参数描述，用于生成文档" class="ml-[10px] min-w-0 flex-1 bg-transparent pt-[2px] outline-none placeholder:text-[#757575]">
            </div>
          </td>
        </tr>
      </tbody>
    </table>
    <div class="flex h-[45px] items-center border-b border-[#e6e8ea] pl-[15px]">
      <button class="flex items-center gap-2"><svg class="h-[5px] w-[7px] fill-current"><use href="#caret"/></svg>路径变量</button>
    </div>

    <div class="flex h-[43px] border-b border-[#e6e8ea] bg-[#f7f7f7] pl-[10px]">
      <button class="border-b-3 border-transparent px-[15px]">响应</button>
      <button class="border-b-3 border-transparent px-[15px]">请求头 <span class="text-xs text-[#57b881]">(5)</span></button>
      <button class="border-b-3 border-[#ef6a5e] px-[15px]">响应头 <span class="text-xs text-[#57b881]">(3)</span></button>
      <button class="border-b-3 border-transparent px-[15px]">Cookie <span class="text-xs text-[#57b881]">(1)</span></button>
      <button class="flex items-center gap-[2px] border-b-3 border-transparent px-4"><svg class="size-[13px] fill-[#57b881]"><use href="#check"/></svg>成功响应示例及文档</button>
      <button class="flex items-center gap-[2px] border-b-3 border-transparent px-[15px]"><svg class="size-[13px] fill-[#ef6a5e]"><use href="#exclaim"/></svg>错误响应示例及文档</button>
    </div>
    <table class="w-full table-fixed text-xs">
      <tbody>
        <tr class="h-[35px] border-b border-[#e6e8ea]"><td class="w-[111px] border-r border-[#e6e8ea]"></td><td class="border-r border-[#e6e8ea] px-[10px]">Content-Length</td><td class="border-r border-[#e6e8ea] px-[10px]">1075</td></tr>
        <tr class="h-[35px] border-b border-[#e6e8ea]"><td class="border-r border-[#e6e8ea]"></td><td class="border-r border-[#e6e8ea] px-[10px]">Content-Type</td><td class="border-r border-[#e6e8ea] px-[10px]">text/html;charset=utf-8</td></tr>
        <tr class="h-[35px] border-b border-[#e6e8ea]"><td class="border-r border-[#e6e8ea]"></td><td class="border-r border-[#e6e8ea] px-[10px]">Server</td><td class="border-r border-[#e6e8ea] px-[10px]">nginx</td></tr>
      </tbody>
    </table>
  </main>
  <div class="mr-px w-2 shrink-0 bg-[#f5f5f5]"><div class="h-[85%] bg-[#e6e8ea]"></div></div>
</div>

<footer class="relative flex h-8 shrink-0 items-center justify-between border-t border-[#e6e8ea] pr-5 pl-[22px] text-xs text-[#60656c]">
  <div class="flex gap-[26px]">
    <a href="#" class="flex items-center gap-[2px]"><svg class="size-3 fill-current"><use href="#home"/></svg>ApiPost官网</a>
    <a href="#" class="flex items-center gap-[3px]"><svg class="size-[11px] fill-current"><use href="#question"/></svg>提交工单</a>
    <a href="#" class="flex items-center gap-[3px]"><svg class="h-[10px] w-[11px] fill-current"><use href="#book"/></svg>帮助文档</a>
    <a href="#" class="flex items-center gap-[3px] text-[#ef6a5e]"><svg class="size-[10px] fill-current"><use href="#vimeo"/></svg>内置Mock字段变量</a>
  </div>
  <div class="flex items-center text-[#50555c]">
    <div class="flex gap-[21px] text-[13px]">
      <button class="flex items-center gap-[2px]"><svg class="h-[13px] w-[11px] fill-current"><use href="#filecode"/></svg>脚本日志</button>
      <button class="flex items-center gap-[2px]"><svg class="size-[13px] fill-current"><use href="#cog"/></svg>设置</button>
      <button class="flex items-center gap-[2px]"><svg class="size-3 fill-current"><use href="#pie"/></svg>Cookie管理器</button>
    </div>
    <div class="ml-[18px] flex items-center gap-4">
      <span class="flex items-center gap-[2px]"><span class="font-['Liberation_Serif',serif] text-sm font-bold">A</span>字体大小</span>
      <button aria-label="缩小"><svg class="size-3 fill-[#ef6a5e]"><use href="#minusc"/></svg></button>
      <span>100%</span>
      <button aria-label="放大"><svg class="size-3 fill-[#ef6a5e]"><use href="#plusc"/></svg></button>
    </div>
    <a href="#" class="ml-[27px] flex items-center gap-px text-[#ef6a5e]"><svg class="h-[10px] w-[13px] fill-current"><use href="#cloudup"/></svg>检查更新</a>
  </div>
  <span class="pointer-events-none absolute top-[3px] right-2 font-['Open_Sans','Noto_Sans',sans-serif] text-[15px] leading-6 text-[#b4b4b4]/50">https://blog.csdn.net/weixin_41159454</span>
</footer>
</body>
</html>
